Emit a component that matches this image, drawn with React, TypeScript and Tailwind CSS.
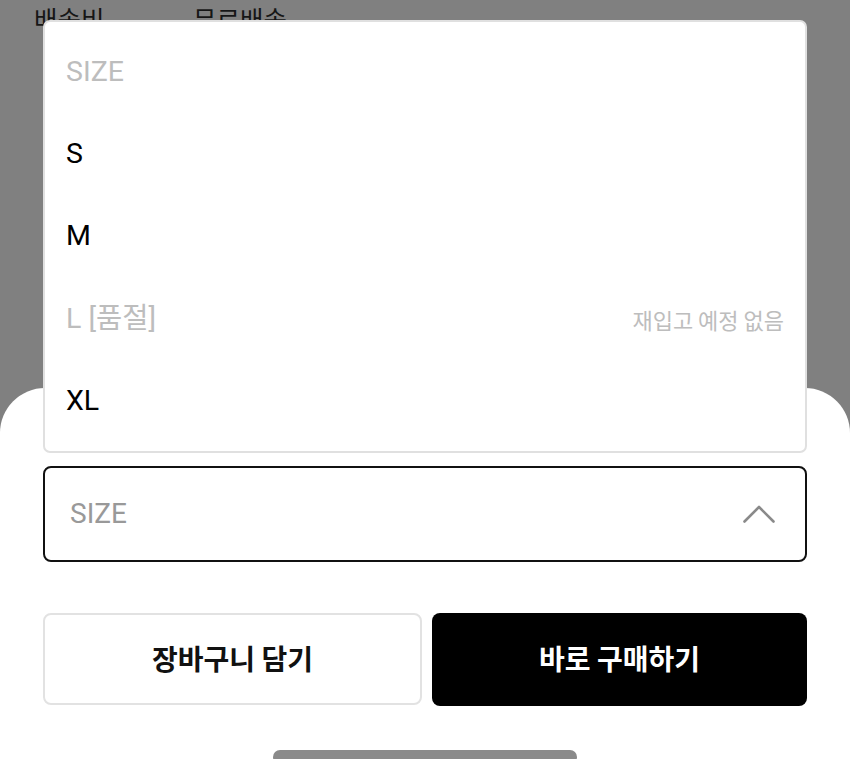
import React from 'react';

const sizes = [
  { label: 'SIZE', muted: true },
  { label: 'S' },
  { label: 'M' },
  { label: 'L [품절]', muted: true, note: '재입고 예정 없음' },
  { label: 'XL' },
];

const kr = { fontFamily: '"Noto Sans CJK KR", sans-serif' };

const ChevronUp = () => (
  <svg width="32" height="18" viewBox="0 0 32 18" fill="none">
    <path d="M1.5 16.5 L16 2 L30.5 16.5" stroke="#8a8a8a" strokeWidth="2.6" strokeLinecap="round" strokeLinejoin="round" />
  </svg>
);

const App = () => {
  return (
    <div
      className="relative h-[759px] w-[850px] overflow-hidden bg-[#808080]"
      style={{ fontFamily: 'Roboto, "Noto Sans CJK KR", sans-serif' }}
    >
      {/* page behind the overlay */}
      <div className="flex pl-[34px] pt-[5px] text-[25.5px] leading-none text-[#161616]" style={kr}>
        <span className="w-[159px]">배송비</span>
        <span>무료배송</span>
      </div>

      {/* bottom sheet */}
      <div className="absolute inset-x-0 bottom-0 flex h-[371px] flex-col overflow-hidden rounded-t-[45px] bg-white px-[43px] pt-[78px]">
        <div className="flex h-[96px] shrink-0 items-center justify-between rounded-[8px] border-2 border-[#111] pl-[25px] pr-[30px]">
          <span className="text-[28px] text-[#999]">SIZE</span>
          <ChevronUp />
        </div>

        <div className="mt-[51px] flex shrink-0 gap-[10px]">
          <button className="flex h-[92px] w-[379px] items-center justify-center rounded-[8px] border-2 border-[#e2e2e2] bg-white pb-[3px] text-[28px] font-bold text-[#111]" style={kr}>
            장바구니 담기
          </button>
          <button className="flex h-[93px] flex-1 items-center justify-center rounded-[8px] bg-black pb-[3px] text-[28px] font-bold text-white" style={kr}>
            바로 구매하기
          </button>
        </div>

        <div className="mx-auto mt-[44px] h-[14px] w-[304px] shrink-0 rounded-full bg-[#8a8a8a]" />
      </div>

      {/* open dropdown menu */}
      <div className="absolute left-[43px] top-[20px] w-[764px] rounded-[7px] border-2 border-[#e0e0e0] bg-white pb-[9px] pt-[9px]">
        {sizes.map((s) => (
          <div key={s.label} className="flex h-[82.3px] items-center justify-between px-[21px]">
            <span className={`text-[28.5px] ${s.muted ? 'text-[#bdbdbd]' : 'text-black'}`}>{s.label}</span>
            {s.note && (
              <span className="text-[22px] text-[#bdbdbd]" style={kr}>
                {s.note}
              </span>
            )}
          </div>
        ))}
      </div>
    </div>
  );
};

export default App;
